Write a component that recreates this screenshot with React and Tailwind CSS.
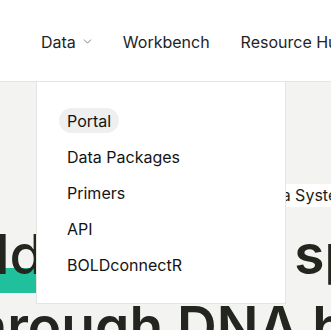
import React from 'react';
import { ChevronDown } from 'lucide-react';

const menuItems = ['Portal', 'Data Packages', 'Primers', 'API', 'BOLDconnectR'];

const App = () => {
  return (
    <div className="relative w-[331px] h-[330px] overflow-hidden bg-[#f3f4f1] font-['Inter',sans-serif] text-[#1f211c]">
      {/* HEADER */}
      <header className="h-[82px] bg-white border-b border-[#e4e4e2] flex items-center pl-[41px] whitespace-nowrap text-[16px] text-[#23241f]">
        <div className="flex items-center gap-[5px] pt-[2px]">
          <span>Data</span>
          <ChevronDown size={13} strokeWidth={1.5} className="text-[#6b6b6b]" />
        </div>
        <span className="pt-[2px] ml-[29px]">Workbench</span>
        <span className="pt-[2px] ml-[31px]">Resource Hub</span>
      </header>

      {/* HERO (behind dropdown) */}
      <div className="pt-[101px] whitespace-nowrap">
        <div className="ml-[126px] inline-flex items-center h-[23px] bg-white pl-[10px] pr-[12px] text-[16px] text-[#1d1d1b]">
          Barcode of Life Data System
        </div>
        <h1 className="mt-[10px] text-[55px] leading-[74px] font-semibold text-[#23251f]">
          <div className="-ml-[112px]">
            <span className="relative font-medium">
              <span className="absolute left-0 right-0 top-[47px] h-[25px] bg-[#20c09d]" />
              <span className="relative">World</span>
            </span>
            <span>'s animal species</span>
          </div>
          <div className="-ml-[46px] -mt-[2px]">through DNA barcodes</div>
        </h1>
      </div>

      {/* DROPDOWN */}
      <div className="absolute left-[36px] top-[81px] w-[250px] h-[223px] bg-white border border-[#e4e4e2] pl-[22px] pt-[26px]">
        <ul className="flex flex-col gap-[11px] text-[16px] text-[#141414]">
          {menuItems.map((item, i) => (
            <li key={item} className="flex">
              <span className={`h-[25px] flex items-center px-[8px] rounded-full ${i === 0 ? 'bg-[#eeeff0]' : ''}`}>
                {item}
              </span>
            </li>
          ))}
        </ul>
      </div>
    </div>
  );
};

export default App;
